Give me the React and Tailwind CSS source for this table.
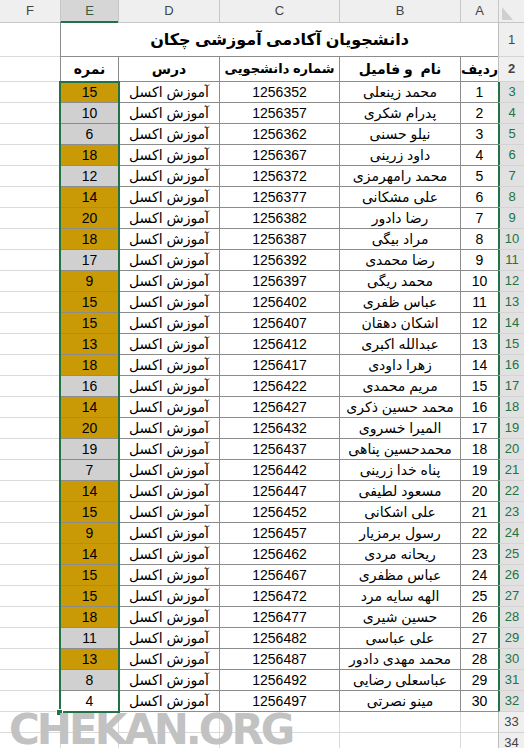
import React from 'react';

const students = [
  ['محمد زینعلی', 1256352, 15, 'g'],
  ['پدرام شکری', 1256357, 10, 's'],
  ['نیلو حسنی', 1256362, 6, 's'],
  ['داود زرینی', 1256367, 18, 'g'],
  ['محمد رامهرمزی', 1256372, 12, 's'],
  ['علی مشکانی', 1256377, 14, 'g'],
  ['رضا دادور', 1256382, 20, 'g'],
  ['مراد بیگی', 1256387, 18, 'g'],
  ['رضا محمدی', 1256392, 17, 's'],
  ['محمد ریگی', 1256397, 9, 'g'],
  ['عباس ظفری', 1256402, 15, 'g'],
  ['اشکان دهقان', 1256407, 15, 'g'],
  ['عبدالله اکبری', 1256412, 13, 'g'],
  ['زهرا داودی', 1256417, 18, 'g'],
  ['مریم محمدی', 1256422, 16, 's'],
  ['محمد حسین ذکری', 1256427, 14, 'g'],
  ['المیرا خسروی', 1256432, 20, 'g'],
  ['محمدحسین پناهی', 1256437, 19, 's'],
  ['پناه خدا زرینی', 1256442, 7, 's'],
  ['مسعود لطیفی', 1256447, 14, 'g'],
  ['علی اشکانی', 1256452, 15, 'g'],
  ['رسول برمزیار', 1256457, 9, 'g'],
  ['ریحانه مردی', 1256462, 14, 'g'],
  ['عباس مظفری', 1256467, 15, 'g'],
  ['الهه سایه مرد', 1256472, 15, 'g'],
  ['حسین شیری', 1256477, 18, 'g'],
  ['علی عباسی', 1256482, 11, 's'],
  ['محمد مهدی دادور', 1256487, 13, 'g'],
  ['عباسعلی رضایی', 1256492, 8, 's'],
  ['مینو نصرتی', 1256497, 4, 'w'],
];

const fill = { g: 'bg-[#c99a06]', s: 'bg-[#d0d0d0]', w: 'bg-white' };

const RowHead = ({ n, selected }) => (
  <div
    className={`w-[26px] shrink-0 flex items-center justify-center border-b border-[#d4d4d4] text-[13px] ${
      selected
        ? 'bg-[#e1e1e1] text-[#217346] border-l-2 border-l-[#217346]'
        : 'bg-[#efefef] text-[#444] border-l border-l-[#bdbdbd]'
    }`}
  >
    {n}
  </div>
);

const Cell = ({ className = '', children }) => (
  <div className={`shrink-0 flex items-center justify-center whitespace-nowrap border-b border-l border-[#8c8c8c] ${className}`}>
    {children}
  </div>
);

const FCell = () => <div className="flex-1 border-b border-[#dadada]" />;

export default function App() {
  return (
    <div
      className="relative w-[524px] h-[748px] overflow-hidden bg-white text-black"
      style={{ fontFamily: '"Liberation Sans", "DejaVu Sans", sans-serif' }}
    >
      <div dir="rtl" className="flex flex-col">
        {/* column letters */}
        <div className="flex h-[23px] bg-[#efefef] text-[13px] text-[#444]">
          <div className="w-[26px] shrink-0 relative border-b border-l border-[#c6c6c6]">
            <svg className="absolute left-[3px] top-[7px]" width="11" height="13" viewBox="0 0 11 13">
              <polygon points="0,0 0,13 11,13" fill="#cfcfcf" />
            </svg>
          </div>
          <div className="w-[38px] shrink-0 flex items-center justify-center border-b border-l border-[#c6c6c6]">A</div>
          <div className="w-[121px] shrink-0 flex items-center justify-center border-b border-l border-[#c6c6c6]">B</div>
          <div className="w-[120px] shrink-0 flex items-center justify-center border-b border-l border-[#c6c6c6]">C</div>
          <div className="w-[101px] shrink-0 flex items-center justify-center border-b border-l border-[#c6c6c6]">D</div>
          <div className="w-[58px] shrink-0 flex items-center justify-center bg-[#d6d6d6] border-b-2 border-b-[#217346] border-l border-l-[#c6c6c6] text-[#3b5b45]">E</div>
          <div className="flex-1 flex items-center justify-center border-b border-[#c6c6c6]">F</div>
        </div>

        {/* row 1: title */}
        <div className="flex h-[34px]">
          <RowHead n={1} />
          <Cell className="w-[438px] text-[16px] font-bold">دانشجویان آکادمی آموزشی چکان</Cell>
          <FCell />
        </div>

        {/* row 2: headings */}
        <div className="flex h-[25px] text-[14px] font-bold">
          <RowHead n={2} />
          <Cell className="w-[38px]">ردیف</Cell>
          <Cell className="w-[121px]">نام&nbsp;&nbsp;و فامیل</Cell>
          <Cell className="w-[120px] text-[13px]">شماره دانشجویی</Cell>
          <Cell className="w-[101px]">درس</Cell>
          <Cell className="w-[58px]">نمره</Cell>
          <FCell />
        </div>

        {students.map(([name, id, grade, tone], i) => (
          <div key={id} className="flex h-[21px] text-[14px]">
            <RowHead n={i + 3} selected />
            <Cell className="w-[38px]">{i + 1}</Cell>
            <Cell className="w-[121px]">{name}</Cell>
            <Cell className="w-[120px]">{id}</Cell>
            <Cell className="w-[101px]">آموزش اکسل</Cell>
            <Cell className={`w-[58px] ${fill[tone]}`}>{grade}</Cell>
            <FCell />
          </div>
        ))}

        {[33, 34].map((n) => (
          <div key={n} className="flex h-[21px]">
            <RowHead n={n} />
            <div className="w-[38px] shrink-0 border-b border-l border-[#dadada]" />
            <div className="w-[121px] shrink-0 border-b border-l border-[#dadada]" />
            <div className="w-[120px] shrink-0 border-b border-l border-[#dadada]" />
            <div className="w-[101px] shrink-0 border-b border-l border-[#dadada]" />
            <div className="w-[58px] shrink-0 border-b border-l border-[#dadada]" />
            <FCell />
          </div>
        ))}
      </div>

      {/* selection E3:E32 */}
      <div className="absolute left-[59px] top-[81px] w-[61px] h-[632px] border-2 border-[#217346] pointer-events-none" />
      <div className="absolute left-[56px] top-[709px] w-[7px] h-[7px] bg-[#217346] border border-white" />

      {/* watermark */}
      <div
        className="absolute left-[9px] top-[709px] text-[42px] leading-none font-bold tracking-[-3px] text-[#c2c2c2] select-none"
        style={{ fontFamily: '"DejaVu Sans", sans-serif' }}
      >
        CHEKAN.ORG
      </div>
    </div>
  );
}
